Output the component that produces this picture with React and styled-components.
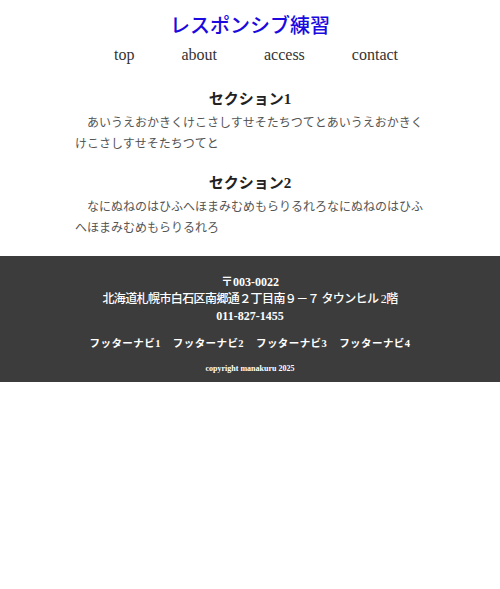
import React from 'react'
import styled, { createGlobalStyle } from 'styled-components'

const Global = createGlobalStyle`
  body {
    margin: 0;
    font-family: "Liberation Serif", "Noto Sans CJK JP", serif;
    color: #333;
    background: #fff;
  }
`

const Header = styled.header`
  padding-top: 12px;
  text-align: center;
`

const Title = styled.h1`
  margin: 0;
  font-size: 20px;
  line-height: 28px;
  font-weight: 500;
  color: #1a0ae0;
`

const Nav = styled.ul`
  list-style: none;
  margin: 3px 0 0;
  padding: 0 0 0 12px;
  display: flex;
  justify-content: center;
  gap: 47px;
`

const NavItem = styled.li`
  font-size: 16px;
  line-height: 24px;
  color: #333;
`

const Main = styled.main`
  width: 350px;
  margin: 0 auto;
  padding: 21px 0 0;
`

const Section = styled.section`
  margin-bottom: 17px;
`

const Heading = styled.h2`
  margin: 0;
  text-align: center;
  font-size: 15px;
  line-height: 22px;
  font-weight: bold;
  color: #222;
`

const Text = styled.p`
  margin: 3px 0 0;
  font-size: 12px;
  line-height: 21px;
  text-indent: 1em;
  color: #555;
`

const Footer = styled.footer`
  background: #3c3c3c;
  color: #fff;
  text-align: center;
  padding: 18px 0 6px;
  font-weight: bold;
`

const Address = styled.address`
  font-style: normal;
  font-size: 12px;
  line-height: 17px;
`

const Street = styled.span`
  font-weight: 500;
  letter-spacing: -0.6px;
`

const FooterNav = styled.ul`
  list-style: none;
  margin: 11px 0 0;
  padding: 0;
  display: flex;
  justify-content: center;
  gap: 12px;
`

const FooterItem = styled.li`
  font-size: 10.5px;
  line-height: 16px;
  letter-spacing: 0.04em;
`

const Copy = styled.small`
  display: block;
  margin-top: 10px;
  font-size: 8px;
  line-height: 14px;
`

export default function App() {
  return (
    <>
      <Global />
      <Header>
        <Title>レスポンシブ練習</Title>
        <Nav>
          {['top', 'about', 'access', 'contact'].map((n) => (
            <NavItem key={n}>{n}</NavItem>
          ))}
        </Nav>
      </Header>
      <Main>
        <Section>
          <Heading>セクション1</Heading>
          <Text>あいうえおかきくけこさしすせそたちつてとあいうえおかきくけこさしすせそたちつてと</Text>
        </Section>
        <Section>
          <Heading>セクション2</Heading>
          <Text>なにぬねのはひふへほまみむめもらりるれろなにぬねのはひふへほまみむめもらりるれろ</Text>
        </Section>
      </Main>
      <Footer>
        <Address>
          〒003-0022<br />
          <Street>北海道札幌市白石区南郷通２丁目南９－７ タウンヒル 2階</Street><br />
          011-827-1455
        </Address>
        <FooterNav>
          {[1, 2, 3, 4].map((i) => (
            <FooterItem key={i}>フッターナビ{i}</FooterItem>
          ))}
        </FooterNav>
        <Copy>copyright manakuru 2025</Copy>
      </Footer>
    </>
  )
}
